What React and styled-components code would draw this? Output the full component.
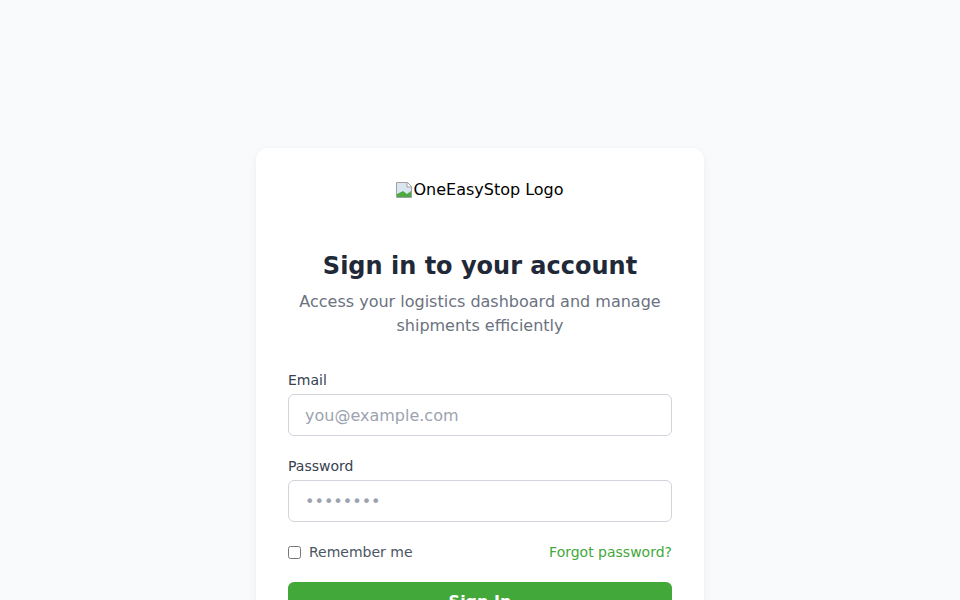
import React from "react";
import styled, { createGlobalStyle } from "styled-components";

const Global = createGlobalStyle`
  html, body { margin: 0; padding: 0; background: #f9fafb; }
  body { font-family: "DejaVu Sans", sans-serif; color: #1f2937; }
  * { box-sizing: border-box; }
`;

const Page = styled.div`
  min-height: 600px;
  display: flex;
  justify-content: center;
  padding-top: 148px;
`;

const Card = styled.div`
  width: 448px;
  background: #ffffff;
  border-radius: 12px;
  box-shadow: 0 4px 12px -1px rgba(0,0,0,0.05), 0 0 3px rgba(0,0,0,0.03);
  padding: 32px;
  display: flex;
  flex-direction: column;
`;

const LogoWrap = styled.div`
  height: 48px;
  display: flex;
  justify-content: center;
  align-items: flex-start;
  margin-bottom: 22px;
`;

const LogoAlt = styled.span`
  display: inline-flex;
  align-items: center;
  font-size: 16px;
  line-height: 19px;
  color: #000;
`;

const Title = styled.h1`
  margin: 0;
  text-align: center;
  font-size: 24px;
  line-height: 32px;
  font-weight: 700;
  color: #1f2937;
`;

const Subtitle = styled.p`
  margin: 8px 0 0;
  text-align: center;
  font-size: 16px;
  line-height: 24px;
  color: #6b7280;
`;

const Form = styled.form`
  margin-top: 32px;
  display: flex;
  flex-direction: column;
  gap: 20px;
`;

const Field = styled.div`
  display: flex;
  flex-direction: column;
`;

const Label = styled.label`
  font-size: 14px;
  line-height: 20px;
  color: #374151;
  margin-bottom: 4px;
`;

const Input = styled.input`
  height: 42px;
  width: 100%;
  border: 1px solid #d1d5db;
  border-radius: 6px;
  padding: 8px 16px;
  font-family: "DejaVu Sans", sans-serif;
  font-size: 16px;
  line-height: 24px;
  color: #1f2937;
  background: #fff;
  outline: none;
  &::placeholder { color: #9ca3af; }
`;

const Row = styled.div`
  display: flex;
  justify-content: space-between;
  align-items: center;
  height: 20px;
`;

const Check = styled.label`
  display: flex;
  align-items: center;
  gap: 8px;
  font-size: 14px;
  color: #4b5563;
  input { margin: 0; width: 13px; height: 13px; }
`;

const Link = styled.a`
  font-size: 14px;
  color: #43a83a;
  text-decoration: none;
`;

const Button = styled.button`
  width: 100%;
  border: none;
  border-radius: 6px;
  background: #43a83a;
  color: #fff;
  font-family: "DejaVu Sans", sans-serif;
  font-weight: 700;
  font-size: 16px;
  line-height: 24px;
  padding: 8px 16px;
  cursor: pointer;
`;

function BrokenImage() {
  return (
    <svg width="16" height="16" viewBox="0 0 16 16" style={{ marginRight: 1 }}>
      <path d="M0.5 0.5h11l4 4v11h-15z" fill="#f1f1f1" stroke="#a0a0a0" />
      <path d="M1 1h10v3.5h4V9L11 12 7 9 1 12z" fill="#d9e6f2" />
      <path d="M1 12l6-3 4 3 4-3v6H1z" fill="#4caa43" />
      <path d="M11 1v4h4" fill="#fff" stroke="#a0a0a0" />
    </svg>
  );
}

export default function App() {
  return (
    <>
      <Global />
      <Page>
        <Card>
          <LogoWrap>
            <LogoAlt>
              <BrokenImage />
              OneEasyStop Logo
            </LogoAlt>
          </LogoWrap>
          <Title>Sign in to your account</Title>
          <Subtitle>
            Access your logistics dashboard and manage
            <br />
            shipments efficiently
          </Subtitle>
          <Form onSubmit={(e) => e.preventDefault()}>
            <Field>
              <Label htmlFor="email">Email</Label>
              <Input id="email" type="email" placeholder="you@example.com" />
            </Field>
            <Field>
              <Label htmlFor="password">Password</Label>
              <Input id="password" type="password" placeholder="••••••••" />
            </Field>
            <Row>
              <Check>
                <input type="checkbox" />
                Remember me
              </Check>
              <Link href="#">Forgot password?</Link>
            </Row>
            <Button type="submit">Sign In</Button>
          </Form>
        </Card>
      </Page>
    </>
  );
}
